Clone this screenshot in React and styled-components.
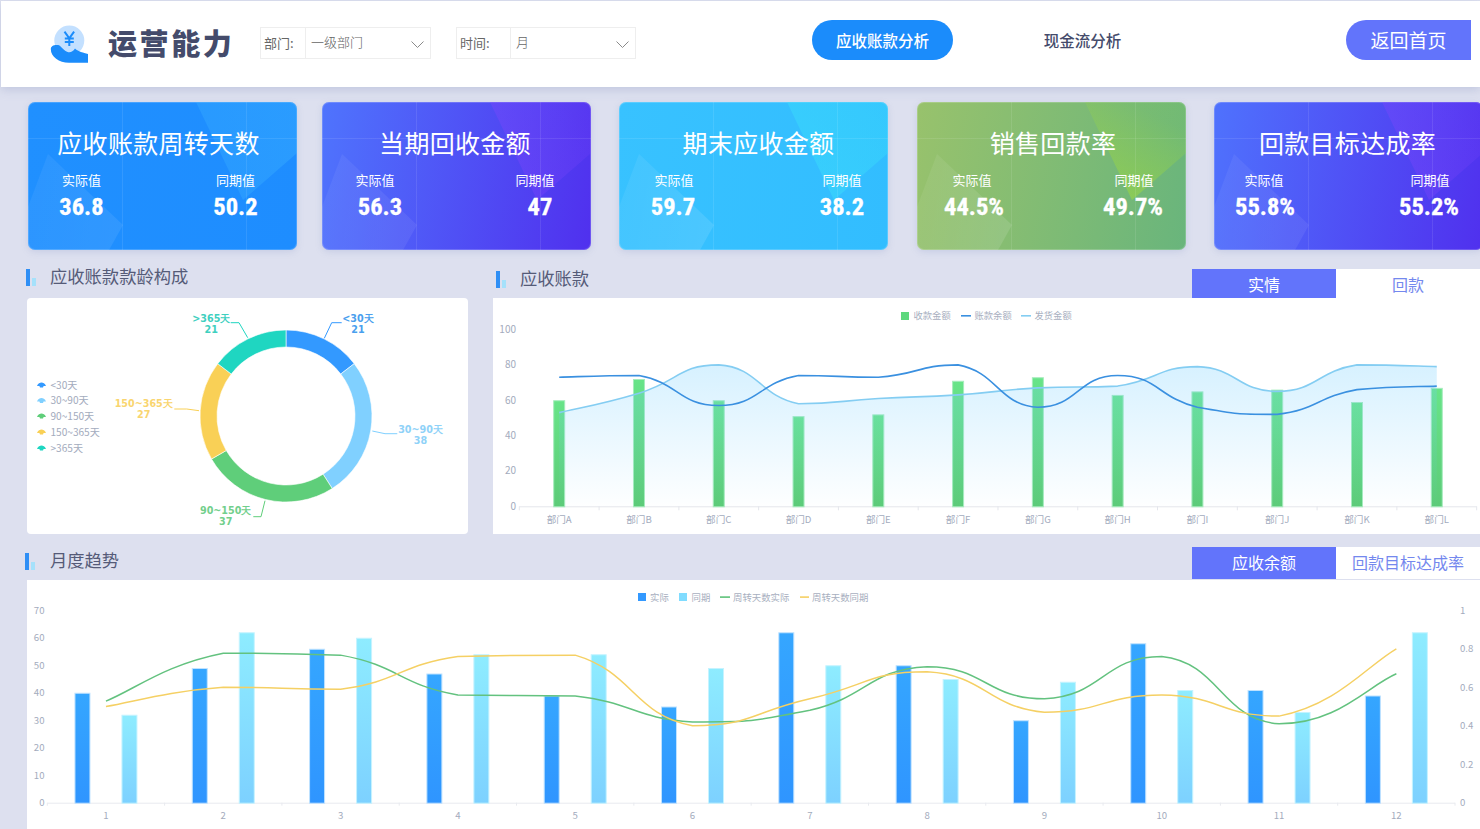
import React from 'react';
import styled, { createGlobalStyle } from 'styled-components';

const FONT = '"Noto Sans CJK SC", "Noto Sans", sans-serif';

const Global = createGlobalStyle`
  html, body { margin: 0; padding: 0; width: 1480px; height: 829px; overflow: hidden; background: #dde0ef; }
  body { font-family: ${FONT}; }
  * { box-sizing: border-box; }
`;

const Page = styled.div`
  width: 1480px;
  height: 829px;
  overflow: hidden;
  padding-top: 1px;
`;

const Header = styled.header`
  display: flex;
  align-items: flex-start;
  height: 86px;
  margin-left: 1px;
  background: #fff;
  box-shadow: 0 3px 9px rgba(160, 168, 205, 0.45);
  position: relative;
`;

const Logo = styled.svg`
  width: 38px;
  height: 38px;
  margin: 24px 0 0 49px;
  flex: none;
`;

const Brand = styled.h1`
  margin: 19px 0 0 20px;
  width: 132px;
  font-size: 29px;
  line-height: 44px;
  font-weight: 900;
  letter-spacing: 2.6px;
  white-space: nowrap;
  color: #444b6b;
`;

const Filter = styled.div`
  display: flex;
  height: 32px;
  margin: 26px 0 0 ${(p) => p.$gap}px;
  border: 1px solid #eeeeee;
  font-size: 13px;
  color: #666;
  flex: none;
`;

const FilterLabel = styled.span`
  display: flex;
  align-items: center;
  width: ${(p) => p.$w}px;
  padding: 0 0 1px 3px;
  border-right: 1px solid #eeeeee;
`;

const FilterValue = styled.span`
  display: flex;
  align-items: center;
  justify-content: space-between;
  width: 124px;
  padding: 0 6px 4px 5px;
  font-weight: 300;
`;

const Chevron = styled.svg`
  width: 13px;
  height: 7px;
  margin-top: 6px;
  fill: none;
  stroke: #8a8a8a;
  stroke-width: 1;
`;

const Pill = styled.button`
  width: 141px;
  height: 40px;
  margin: 19px 0 0 ${(p) => p.$gap}px;
  border: 0;
  padding: 0;
  border-radius: 20px;
  background: ${(p) => (p.$active ? '#1b8cfb' : 'transparent')};
  color: ${(p) => (p.$active ? '#fff' : '#444b6b')};
  font-family: ${FONT};
  font-size: 15.5px;
  font-weight: 500;
  flex: none;
`;

const Back = styled.button`
  width: 125px;
  height: 40px;
  margin: 19px 9px 0 auto;
  border: 0;
  padding: 0 0 2px;
  border-radius: 20px 0 0 20px;
  background: #6274fb;
  color: #fff;
  font-family: ${FONT};
  font-size: 19px;
  flex: none;
`;

const Cards = styled.section`
  display: flex;
  margin: 15px 0 0 28px;
  width: 1480px;
`;

const Card = styled.article`
  position: relative;
  flex: none;
  width: 269px;
  height: 148px;
  margin-left: ${(p) => p.$gap}px;
  padding-top: 23px;
  border-radius: 7px;
  overflow: hidden;
  background: ${(p) => p.$bg};
  box-shadow: inset 0 0 0 1px rgba(255, 255, 255, 0.18), 0 2px 6px rgba(140, 150, 200, 0.25);
  color: #fff;

  &::before {
    content: '';
    position: absolute;
    inset: 0;
    clip-path: polygon(0 105px, 20px 52px, 95px 123px, 81px 148px, 0 148px);
    background: linear-gradient(100deg, rgba(255, 255, 255, 0.05), rgba(255, 255, 255, ${(p) => p.$glow}));
  }

  &::after {
    content: '';
    position: absolute;
    inset: 0;
    clip-path: polygon(168px 0, 269px 0, 269px 51px, 215px 98px);
    background: ${(p) => p.$shard};
  }
`;

const CardGrid = styled.div`
  position: absolute;
  inset: 0;
  z-index: 1;
  background:
    linear-gradient(rgba(255, 255, 255, 0.09), rgba(255, 255, 255, 0.09)) 94px 0 / 1px 100% no-repeat,
    linear-gradient(rgba(255, 255, 255, 0.09), rgba(255, 255, 255, 0.09)) 218px 0 / 1px 100% no-repeat,
    linear-gradient(rgba(255, 255, 255, 0.09), rgba(255, 255, 255, 0.09)) 0 36px / 100% 1px no-repeat;
`;

const CardBody = styled.div`
  position: relative;
  z-index: 2;
`;

const CardTitle = styled.h2`
  margin: 0;
  font-size: 25px;
  line-height: 34px;
  font-weight: 400;
  letter-spacing: 0.3px;
  white-space: nowrap;
  text-align: center;
  padding-left: ${(p) => Math.max(p.$shift, 0) * 2}px;
  padding-right: ${(p) => Math.max(-p.$shift, 0) * 2}px;
`;

const Stats = styled.div`
  display: flex;
  justify-content: space-between;
  margin-top: 12px;
  padding: 0 ${(p) => p.$right}px 0 ${(p) => p.$left}px;
`;

const Stat = styled.div`
  width: 60px;
  text-align: center;
  white-space: nowrap;
`;

const StatLabel = styled.div`
  font-size: 13px;
  line-height: 18px;
`;

const StatValue = styled.div`
  font-family: "Liberation Sans Narrow", "Roboto Condensed", Roboto, sans-serif;
  font-size: 24.5px;
  line-height: 32px;
  font-weight: 700;
  padding-top: 2px;
  -webkit-text-stroke: 0.3px #fff;
  transform: translateX(${(p) => p.$shift || 0}px);
`;

const Row = styled.section`
  display: grid;
  grid-template-columns: 441px 987px;
  column-gap: 25px;
  margin: 19px 0 0 27px;
`;

const Column = styled.div`
  min-width: 0;
`;

const SectionHead = styled.div`
  display: flex;
  align-items: flex-start;
  height: ${(p) => p.$h}px;
  margin-left: ${(p) => p.$inset}px;
`;

const Heading = styled.div`
  display: flex;
  align-items: center;
  height: 17px;
  margin-top: ${(p) => p.$top}px;
`;

const Mark = styled.span`
  display: flex;
  align-items: flex-end;
  gap: 2px;
  height: 17px;
  width: ${(p) => p.$w || 24}px;
  flex: none;

  &::before { content: ''; width: 4px; height: 17px; background: #2f8ff5; }
  &::after { content: ''; width: 4px; height: 8px; background: #a5e1fb; }
`;

const SectionTitle = styled.h3`
  margin: 0 0 3px;
  font-size: 17.3px;
  line-height: 24px;
  font-weight: 400;
  color: #555b78;
  white-space: nowrap;
`;

const Tabs = styled.div`
  display: flex;
  margin-left: auto;
  align-self: stretch;
`;

const Tab = styled.button`
  width: 144px;
  border: 0;
  padding: 0 0 ${(p) => p.$lift || 0}px;
  background: ${(p) => (p.$active ? '#6274fb' : '#fff')};
  color: ${(p) => (p.$active ? '#fff' : '#7488ee')};
  font-family: ${FONT};
  font-size: 16px;
  line-height: 1;
`;

const Panel = styled.div`
  height: 236px;
  background: #fff;
  border-radius: ${(p) => p.$r || 0}px;
  overflow: hidden;
`;

const WidePanel = styled.div`
  height: 250px;
  margin-top: 1px;
  background: #fff;
`;

const Wide = styled.section`
  margin: 13px 0 0 27px;
`;

const ChartSvg = styled.svg`
  display: block;
  width: 100%;
  height: 100%;
  font-family: ${FONT};
`;

const clamp = (v, a, b) => Math.min(Math.max(v, Math.min(a, b)), Math.max(a, b));

const smooth = (pts) => {
  const s = 0.5;
  const ctrl = pts.map((p, i) => {
    const a = pts[Math.max(i - 1, 0)];
    const b = pts[Math.min(i + 1, pts.length - 1)];
    return [(b[0] - a[0]) * s * 0.5, (b[1] - a[1]) * s * 0.5];
  });
  let d = `M${pts[0][0].toFixed(2)} ${pts[0][1].toFixed(2)}`;
  for (let i = 1; i < pts.length; i++) {
    const p0 = pts[i - 1];
    const p1 = pts[i];
    const c1y = clamp(p0[1] + ctrl[i - 1][1], p0[1], p1[1]);
    const c2y = clamp(p1[1] - ctrl[i][1], p0[1], p1[1]);
    d += `C${(p0[0] + ctrl[i - 1][0]).toFixed(2)} ${c1y.toFixed(2)} ${(p1[0] - ctrl[i][0]).toFixed(2)} ${c2y.toFixed(2)} ${p1[0].toFixed(2)} ${p1[1].toFixed(2)}`;
  }
  return d;
};

const arc = (cx, cy, R, r, a0, a1) => {
  const pt = (rad, a) => {
    const t = (a * Math.PI) / 180;
    return `${(cx + rad * Math.sin(t)).toFixed(2)} ${(cy - rad * Math.cos(t)).toFixed(2)}`;
  };
  const large = a1 - a0 > 180 ? 1 : 0;
  return `M${pt(R, a0)}A${R} ${R} 0 ${large} 1 ${pt(R, a1)}L${pt(r, a1)}A${r} ${r} 0 ${large} 0 ${pt(r, a0)}Z`;
};

const AGE = [
  { name: '<30天', value: 21, color: '#3399ff', text: '#4a9fee', line: '324.3,338.3 331.7,322.7 341.7,322.7', lx: 358, ly: 318 },
  { name: '30~90天', value: 38, color: '#80d0ff', text: '#8fd2f8', line: '372.3,431 385,433.7 397.3,433.7', lx: 420.5, ly: 429 },
  { name: '90~150天', value: 37, color: '#5fce7a', text: '#72cf8c', line: '265,500.7 261,516.7 253.3,516.7', lx: 225.7, ly: 510.7 },
  { name: '150~365天', value: 27, color: '#f9d056', text: '#f9d56f', line: '199,410.7 186.7,409 174.3,409', lx: 143.7, ly: 403.7 },
  { name: '>365天', value: 21, color: '#1fd6c1', text: '#3fd0bf', line: '247.7,337.7 239,322.7 230.7,322.7', lx: 211.3, ly: 318 },
];

const LEGEND_Y = [385, 400.5, 416, 432, 448];

function AgeChart() {
  let acc = 0;
  return (
    <ChartSvg viewBox="27 298 441 236">
      {AGE.map((s) => {
        const a0 = acc;
        acc += (s.value / 144) * 360;
        return <path key={s.name} d={arc(286, 416, 86, 69, a0, acc)} fill={s.color} stroke="#fff" strokeWidth="0.6" />;
      })}
      {AGE.map((s) => (
        <g key={s.name}>
          <polyline points={s.line} fill="none" stroke={s.color} strokeWidth="1" />
          <text x={s.lx} y={s.ly + 3.5} textAnchor="middle" fontFamily="DejaVu Sans" fontWeight="700" fontSize="9.6" fill={s.text}>{s.name}</text>
          <text x={s.lx} y={s.ly + 14.5} textAnchor="middle" fontFamily="DejaVu Sans" fontWeight="700" fontSize="9.6" fill={s.text}>{s.value}</text>
        </g>
      ))}
      {AGE.map((s, i) => (
        <g key={s.name}>
          <path d={`M37 ${LEGEND_Y[i] + 1}C38 ${LEGEND_Y[i] - 2} 40 ${LEGEND_Y[i] - 2.6} 41.5 ${LEGEND_Y[i] - 2.6}S45 ${LEGEND_Y[i] - 2} 46 ${LEGEND_Y[i] + 1}H43.6L43 ${LEGEND_Y[i] + 2.4}H40L39.4 ${LEGEND_Y[i] + 1}Z`} fill={s.color} />
          <text x="50.5" y={LEGEND_Y[i] + 3.5} fontSize="10.1" fill="#a3abbd">{s.name}</text>
        </g>
      ))}
    </ChartSvg>
  );
}

const DEPTS = 'ABCDEFGHIJKL'.split('');
const RCV = [60, 72, 60, 51, 52, 71, 73, 63, 65, 66, 59, 67];
const BAL = [73, 74, 57, 74, 73, 80, 56, 74, 56, 52, 66, 68];
const SHP = [53, 64, 80, 58, 61, 63, 67, 68, 79, 65, 80, 79];

function ReceivableChart() {
  const x0 = 519.3;
  const step = 79.78;
  const base = 506.3;
  const k = 1.768;
  const cx = (i) => x0 + step * (i + 0.5);
  const pts = (arr) => arr.map((v, i) => [cx(i), base - v * k]);
  const ship = pts(SHP);
  const shipPath = smooth(ship);
  const area = `${shipPath}L${ship[11][0]} ${base}L${ship[0][0]} ${base}Z`;
  return (
    <ChartSvg viewBox="493 298 987 236">
      <defs>
        <linearGradient id="gbar" x1="0" y1="0" x2="0" y2="1">
          <stop offset="0" stopColor="#68e488" />
          <stop offset="1" stopColor="#5ccb78" />
        </linearGradient>
        <linearGradient id="garea" gradientUnits="userSpaceOnUse" x1="0" y1="365" x2="0" y2="506">
          <stop offset="0" stopColor="#6fcdff" stopOpacity="0.28" />
          <stop offset="1" stopColor="#6fcdff" stopOpacity="0.01" />
        </linearGradient>
      </defs>
      <rect x="901" y="312" width="8" height="8" fill="#5ed87e" />
      <text x="913.5" y="319" fontSize="9.3" fill="#a8afc0">收款金额</text>
      <rect x="961" y="315" width="10" height="1.6" fill="#3a90e0" />
      <text x="974.5" y="319" fontSize="9.3" fill="#a8afc0">账款余额</text>
      <rect x="1021" y="315" width="10" height="1.6" fill="#84cdf2" />
      <text x="1034.5" y="319" fontSize="9.3" fill="#a8afc0">发货金额</text>
      {[0, 20, 40, 60, 80, 100].map((v) => (
        <text key={v} x="516" y={base - v * k + 3.5} textAnchor="end" fontSize="10" fill="#a3abbd">{v}</text>
      ))}
      <line x1={x0} x2={x0 + step * 12} y1={base + 0.5} y2={base + 0.5} stroke="#e4e6ec" />
      {Array.from({ length: 13 }, (_, i) => (
        <line key={i} x1={x0 + step * i} x2={x0 + step * i} y1={base} y2={base + 4} stroke="#e4e6ec" />
      ))}
      {RCV.map((v, i) => (
        <rect key={i} x={cx(i) - 5.5} y={base - v * k + 0.5} width="11" height={v * k} fill="url(#gbar)" stroke="#a6ecbd" strokeWidth="1" />
      ))}
      <path d={area} fill="url(#garea)" />
      <path d={shipPath} fill="none" stroke="#84cdf2" strokeWidth="1.6" />
      <path d={smooth(pts(BAL))} fill="none" stroke="#3a90e0" strokeWidth="1.6" />
      {DEPTS.map((d, i) => (
        <text key={d} x={cx(i)} y="523" textAnchor="middle" fontSize="9.6" fill="#a3abbd">部门{d}</text>
      ))}
    </ChartSvg>
  );
}

const ACT = [40, 49, 56, 47, 39, 35, 62, 50, 30, 58, 41, 39];
const PRE = [32, 62, 60, 54, 54, 49, 50, 45, 44, 41, 33, 62];
const TURN = [0.528, 0.777, 0.767, 0.56, 0.555, 0.42, 0.48, 0.707, 0.54, 0.76, 0.41, 0.67];
const TURNP = [0.5, 0.6, 0.59, 0.76, 0.767, 0.4, 0.54, 0.68, 0.47, 0.56, 0.45, 0.8];

function MonthlyChart() {
  const x0 = 47.3;
  const step = 117.31;
  const base = 802.7;
  const k = 2.749;
  const kr = 192.4;
  const cx = (i) => x0 + step * (i + 0.5);
  const line = (arr) => smooth(arr.map((v, i) => [cx(i), base - v * kr]));
  return (
    <ChartSvg viewBox="27 580 1453 250">
      <defs>
        <linearGradient id="gact" x1="0" y1="0" x2="0" y2="1">
          <stop offset="0" stopColor="#35a6ff" />
          <stop offset="1" stopColor="#2f95ff" />
        </linearGradient>
        <linearGradient id="gpre" x1="0" y1="0" x2="0" y2="1">
          <stop offset="0" stopColor="#8eecff" />
          <stop offset="1" stopColor="#7dd1ff" />
        </linearGradient>
      </defs>
      <rect x="638" y="593" width="8" height="8" fill="#3399ff" />
      <text x="650" y="600.5" fontSize="9.4" fill="#a8afc0">实际</text>
      <rect x="679" y="593" width="8" height="8" fill="#80dcff" />
      <text x="691.5" y="600.5" fontSize="9.4" fill="#a8afc0">同期</text>
      <rect x="720" y="596.3" width="10" height="1.6" fill="#5fc27a" />
      <text x="733" y="600.5" fontSize="9.4" fill="#a8afc0">周转天数实际</text>
      <rect x="800" y="596.3" width="9" height="1.6" fill="#f5d064" />
      <text x="812" y="600.5" fontSize="9.4" fill="#a8afc0">周转天数同期</text>
      {[0, 10, 20, 30, 40, 50, 60, 70].map((v) => (
        <text key={v} x="44.5" y={base - v * k + 3.5} textAnchor="end" fontSize="9.6" fill="#a3abbd">{v}</text>
      ))}
      {[0, 0.2, 0.4, 0.6, 0.8, 1].map((v) => (
        <text key={v} x="1460" y={base - v * kr + 3.5} fontSize="9.6" fill="#a3abbd">{v}</text>
      ))}
      <line x1={x0} x2={x0 + step * 12} y1={base + 0.5} y2={base + 0.5} stroke="#e8eaef" />
      {Array.from({ length: 13 }, (_, i) => (
        <line key={i} x1={x0 + step * i} x2={x0 + step * i} y1={base} y2={base + 3} stroke="#e8eaef" />
      ))}
      {ACT.map((v, i) => (
        <rect key={i} x={cx(i) - 23.5 - 7.5} y={base - v * k + 0.5} width="15" height={v * k} fill="url(#gact)" stroke="#bfe2ff" strokeWidth="1" />
      ))}
      {PRE.map((v, i) => (
        <rect key={i} x={cx(i) + 23.5 - 7.5} y={base - v * k + 0.5} width="15" height={v * k} fill="url(#gpre)" stroke="#c5f3ff" strokeWidth="1" />
      ))}
      <path d={line(TURN)} fill="none" stroke="#63c27f" strokeWidth="1.5" />
      <path d={line(TURNP)} fill="none" stroke="#f5d064" strokeWidth="1.5" />
      {ACT.map((_, i) => (
        <text key={i} x={cx(i)} y="818.5" textAnchor="middle" fontSize="9.6" fill="#a3abbd">{i + 1}</text>
      ))}
    </ChartSvg>
  );
}

const BLUE_SHARD = 'linear-gradient(250deg, rgba(70,190,255,0.3), rgba(70,190,255,0.12))';
const PURPLE_SHARD = 'linear-gradient(250deg, rgba(135,70,255,0.12), rgba(135,70,255,0.75))';

const CARDS = [
  { gap: 0, title: '应收账款周转天数', shift: -4, lc: 53.5, rc: 207.5, a: '36.8', b: '50.2', bg: 'linear-gradient(100deg,#2090ff,#1e8dff)', shard: BLUE_SHARD, glow: 0.12 },
  { gap: 25, title: '当期回收金额', shift: -1.5, lc: 53, rc: 213, a: '56.3', b: '47', sa: 5, sb: 5, bg: 'linear-gradient(100deg,#4f74fd,#5030ee)', shard: PURPLE_SHARD, glow: 0.09 },
  { gap: 28, title: '期末应收金额', shift: 5, lc: 55, rc: 223, a: '59.7', b: '38.2', sa: -1, bg: 'linear-gradient(100deg,#38c2ff,#32bdff)', shard: 'linear-gradient(230deg, rgba(60,225,250,0.3), rgba(60,225,250,0.7))', glow: 0.2 },
  { gap: 29, title: '销售回款率', shift: 1.5, lc: 55, rc: 217, a: '44.5%', b: '49.7%', sa: 2, sb: -1, bg: 'linear-gradient(100deg,#98c26c,#69b57c)', shard: 'linear-gradient(205deg, rgba(150,215,70,0.12) 10%, rgba(155,215,65,1) 75%)', glow: 0.22 },
  { gap: 28, title: '回款目标达成率', shift: -1, lc: 50, rc: 216, a: '55.8%', b: '55.2%', sa: 1, sb: -1, bg: 'linear-gradient(100deg,#4f72fd,#5030ee)', shard: PURPLE_SHARD, glow: 0.09 },
];

export default function App() {
  return (
    <Page>
      <Global />
      <Header>
        <Logo viewBox="0 0 38 38">
          <circle cx="19.3" cy="15.5" r="15" fill="#c3e0ff" />
          <path d="M14.5 6.7l4.8 6.6 4.8-6.6M14.8 13.4h9M14.8 17h9M19.3 13.3V21" fill="none" stroke="#1b8cfb" strokeWidth="2" />
          <path d="M.8 24C.8 21 4 19.5 8 20c3 .5 5 5 9 6.7 3 1.3 5.5.3 8-3.2 2 2 5 3.5 13.2 5.5v8.7H19C9 37.7.8 32 .8 24z" fill="#1b8cfb" />
        </Logo>
        <Brand>运营能力</Brand>
        <Filter $gap={20}>
          <FilterLabel $w={45}>部门:</FilterLabel>
          <FilterValue>一级部门<Chevron viewBox="0 0 13 7"><path d="M.5.5l6 6 6-6" /></Chevron></FilterValue>
        </Filter>
        <Filter $gap={25}>
          <FilterLabel $w={54}>时间:</FilterLabel>
          <FilterValue>月<Chevron viewBox="0 0 13 7"><path d="M.5.5l6 6 6-6" /></Chevron></FilterValue>
        </Filter>
        <Pill $active $gap={176}>应收账款分析</Pill>
        <Pill $gap={59}>现金流分析</Pill>
        <Back>返回首页</Back>
      </Header>

      <Cards>
        {CARDS.map((c) => (
          <Card key={c.title} $gap={c.gap} $bg={c.bg} $shard={c.shard} $glow={c.glow}>
            <CardGrid />
            <CardBody>
              <CardTitle $shift={c.shift}>{c.title}</CardTitle>
              <Stats $left={c.lc - 30} $right={239 - c.rc}>
                <Stat>
                  <StatLabel>实际值</StatLabel>
                  <StatValue $shift={c.sa}>{c.a}</StatValue>
                </Stat>
                <Stat>
                  <StatLabel>同期值</StatLabel>
                  <StatValue $shift={c.sb}>{c.b}</StatValue>
                </Stat>
              </Stats>
            </CardBody>
          </Card>
        ))}
      </Cards>

      <Row>
        <Column>
          <SectionHead $h={29} $inset={-1}>
            <Heading $top={0}>
              <Mark />
              <SectionTitle>应收账款款龄构成</SectionTitle>
            </Heading>
          </SectionHead>
          <Panel $r={4}><AgeChart /></Panel>
        </Column>
        <Column>
          <SectionHead $h={29} $inset={3}>
            <Heading $top={2}>
              <Mark />
              <SectionTitle>应收账款</SectionTitle>
            </Heading>
            <Tabs>
              <Tab $active>实情</Tab>
              <Tab>回款</Tab>
            </Tabs>
          </SectionHead>
          <Panel><ReceivableChart /></Panel>
        </Column>
      </Row>

      <Wide>
        <SectionHead $h={32} $inset={-2}>
          <Heading $top={6}>
            <Mark $w={25} />
            <SectionTitle>月度趋势</SectionTitle>
          </Heading>
          <Tabs>
            <Tab $active $lift={2}>应收余额</Tab>
            <Tab $lift={2}>回款目标达成率</Tab>
          </Tabs>
        </SectionHead>
        <WidePanel><MonthlyChart /></WidePanel>
      </Wide>
    </Page>
  );
}
